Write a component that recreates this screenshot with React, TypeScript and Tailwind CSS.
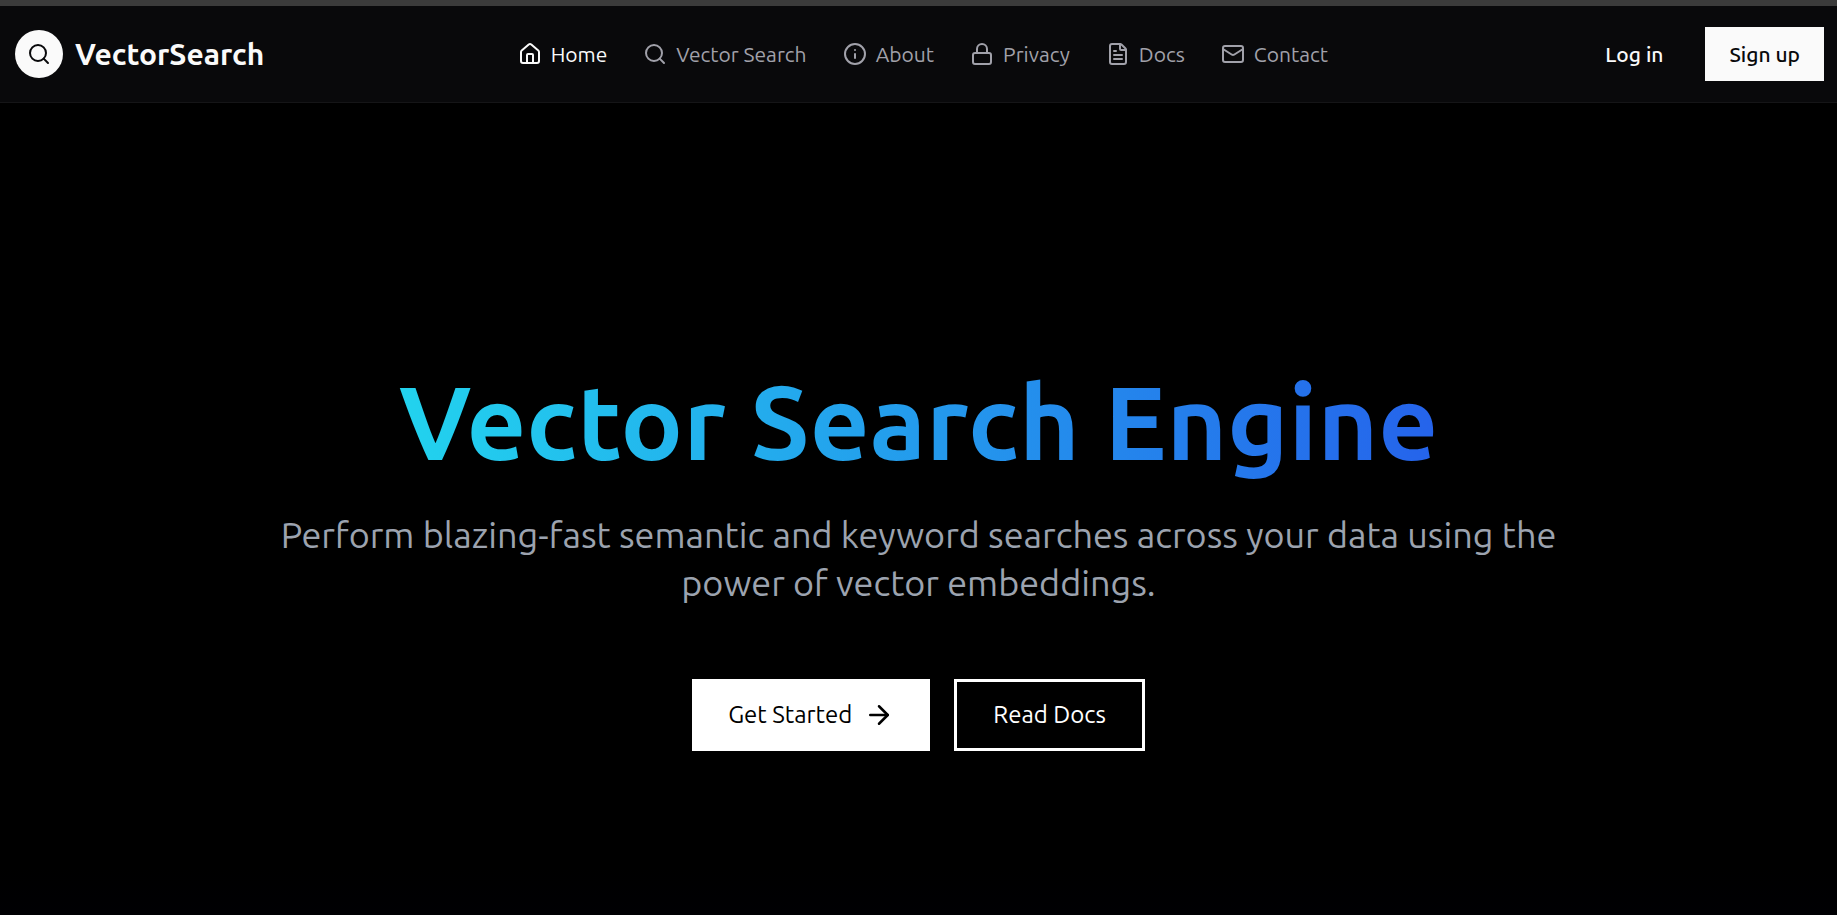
import type { ReactNode } from 'react';
import { ArrowRight, FileText, House, Info, Lock, Mail, Search } from 'lucide-react';

const navItems = [
  { label: 'Home', href: '#home', icon: House },
  { label: 'Vector Search', href: '#search', icon: Search },
  { label: 'About', href: '#about', icon: Info },
  { label: 'Privacy', href: '#privacy', icon: Lock },
  { label: 'Docs', href: '#docs', icon: FileText },
  { label: 'Contact', href: '#contact', icon: Mail },
];

export default function App() {
  return (
    <div className="flex min-h-screen flex-col bg-black font-['Ubuntu','Noto_Sans',sans-serif] text-white">
      <Header />
      <Hero />
    </div>
  );
}

function Header() {
  return (
    <header className="flex shrink-0 items-center justify-between border-t-6 border-b border-t-[#3b3b3b] border-b-[#151517] bg-[#09090b] pt-[21px] pr-[13px] pb-[21px] pl-[15px]">
      <a href="#home" className="flex items-center gap-3">
        <span className="flex size-12 items-center justify-center rounded-full bg-[#fafafa] text-[#09090b]">
          <Search size={24} />
        </span>
        <span className="text-[30px] leading-9 font-semibold text-[#fafafa]">VectorSearch</span>
      </a>

      <nav className="flex items-center gap-9">
        {navItems.map((item) => (
          <NavLink key={item.label} href={item.href} active={item.label === 'Home'} icon={<item.icon size={24} />}>
            {item.label}
          </NavLink>
        ))}
      </nav>

      <div className="flex items-center gap-[18px]">
        <button type="button" className="h-[54px] px-6 text-[21px] leading-8 font-medium text-[#fafafa]">
          Log in
        </button>
        <button type="button" className="h-[54px] bg-[#fafafa] px-6 text-[21px] leading-8 font-medium text-[#09090b]">
          Sign up
        </button>
      </div>
    </header>
  );
}

function NavLink({ href, active, icon, children }: { href: string; active: boolean; icon: ReactNode; children: ReactNode }) {
  return (
    <a
      href={href}
      className={`flex items-center gap-[9px] text-[21px] leading-8 whitespace-nowrap ${
        active ? 'text-[#fafafa]' : 'text-[#a1a1aa]'
      }`}
    >
      {icon}
      {children}
    </a>
  );
}

function Hero() {
  return (
    <main className="flex flex-1 flex-col items-center justify-center bg-[linear-gradient(to_top,#000003,#000000_48px)] px-6 pt-[85px] text-center">
      <h1 className="bg-[linear-gradient(to_right,#22d3ee,#2563eb)] bg-clip-text text-[104px] leading-[139px] font-semibold text-transparent">
        Vector Search Engine
      </h1>
      <p className="mt-5 max-w-[1344px] text-[36px] leading-12 text-[#9ca3af]">
        Perform blazing-fast semantic and keyword searches across your data using the power of vector embeddings.
      </p>
      <div className="mt-[72px] flex gap-6">
        <button type="button" className="flex h-[72px] items-center gap-3 bg-white px-9 text-[24px] text-black">
          Get Started
          <ArrowRight size={30} />
        </button>
        <button type="button" className="h-[72px] border-3 border-white px-9 text-[24px] text-white">
          Read Docs
        </button>
      </div>
    </main>
  );
}
